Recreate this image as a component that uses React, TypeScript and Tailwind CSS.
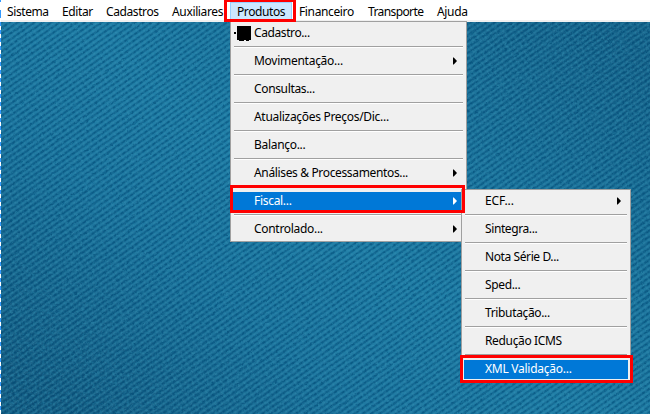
import type { ReactNode } from 'react';

type Entry = { label: string; tracking: string; submenu?: boolean; active?: boolean; icon?: boolean };

const bar = [
  { label: 'Sistema', cell: 'w-[55px] pl-[7px]', tracking: 'tracking-[-0.4px]' },
  { label: 'Editar', cell: 'w-[44px] pl-[7px]', tracking: 'tracking-[-0.4px]' },
  { label: 'Cadastros', cell: 'w-[66px] pl-[7px]', tracking: 'tracking-[-0.4px]' },
  { label: 'Auxiliares', cell: 'w-[65px] pl-[7px]', tracking: 'tracking-[-0.35px]' },
  { label: 'Produtos', cell: 'w-[62px] pl-[6px]', tracking: 'tracking-[-0.4px]', active: true },
  { label: 'Financeiro', cell: 'w-[69px] pl-[7px]', tracking: 'tracking-[-0.37px]' },
  { label: 'Transporte', cell: 'w-[69px] pl-[7px]', tracking: 'tracking-[-0.6px]' },
  { label: 'Ajuda', cell: 'w-[45px] pl-[7px]', tracking: 'tracking-[-0.35px]' },
];

const produtos: Entry[] = [
  { label: 'Cadastro...', tracking: 'tracking-[-0.4px]', icon: true },
  { label: 'Movimentação...', tracking: 'tracking-[-0.27px]', submenu: true },
  { label: 'Consultas...', tracking: 'tracking-[-0.35px]' },
  { label: 'Atualizações Preços/Dic...', tracking: 'tracking-[-0.3px]' },
  { label: 'Balanço...', tracking: 'tracking-[-0.3px]' },
  { label: 'Análises & Processamentos...', tracking: 'tracking-[-0.35px]', submenu: true },
  { label: 'Fiscal...', tracking: 'tracking-[-0.3px]', submenu: true, active: true },
  { label: 'Controlado...', tracking: 'tracking-[-0.3px]', submenu: true },
];

const fiscal: Entry[] = [
  { label: 'ECF...', tracking: 'tracking-[-0.1px]', submenu: true },
  { label: 'Sintegra...', tracking: 'tracking-[-0.4px]' },
  { label: 'Nota Série D...', tracking: 'tracking-[-0.4px]' },
  { label: 'Sped...', tracking: 'tracking-[-0.35px]' },
  { label: 'Tributação...', tracking: 'tracking-[-0.35px]' },
  { label: 'Redução ICMS', tracking: 'tracking-[-0.35px]' },
  { label: 'XML Validação...', tracking: 'tracking-[-0.25px]', active: true },
];

function Menu({ entries, className }: { entries: Entry[]; className: string }) {
  return (
    <div className={'absolute border border-[#a0a0a0] bg-[#f0f0f0] p-0.5 ' + className}>
      {entries.map((e, i) => (
        <div key={e.label}>
          {i > 0 && (
            <div className="mx-px flex h-[9px] flex-col pt-[3px]">
              <div className="h-px bg-[#a0a0a0]" />
              <div className="h-px bg-white" />
            </div>
          )}
          <div className={'flex h-[19px] items-center ' + (e.active ? 'bg-[#0078d7] text-white' : 'text-black')}>
            <div className="w-[21px] shrink-0">
              {e.icon && (
                <svg width="20" height="19" viewBox="0 0 20 19" shapeRendering="crispEdges">
                  <path fill="#000" d="M4 2h14v14h-2v1h-3v-1h-2v1H6v-1H4zM1 8h2v2H1z" />
                </svg>
              )}
            </div>
            <span className={'h-[19px] flex-1 whitespace-nowrap leading-[17px] ' + e.tracking}>{e.label}</span>
            {e.submenu && (
              <svg className="mb-px mr-[7px] shrink-0" width="4" height="8" viewBox="0 0 4 8">
                <path d="M0 0.5h.7L4 4 .7 7.5H0z" fill="currentColor" />
              </svg>
            )}
          </div>
        </div>
      ))}
    </div>
  );
}

function Desktop({ children }: { children: ReactNode }) {
  return (
    <main className="relative flex-1 bg-[#186b94]">
      <svg className="block" width="650" height="392">
        <defs>
          <pattern id="weave" width="6" height="4.8" patternUnits="userSpaceOnUse" patternTransform="rotate(-35)">
            <rect y="0" width="6" height="1.9" fill="#064a75" opacity=".34" />
            <rect x="1" y="0" width="3" height="2" fill="#064a75" opacity=".35" />
            <rect y="2.6" width="6" height="1.5" fill="#3697b8" opacity=".28" />
            <rect x="4" y="2.4" width="2" height="1.8" fill="#45a3c1" opacity=".2" />
          </pattern>
          <linearGradient id="light" gradientUnits="userSpaceOnUse" x1="130" y1="440" x2="520" y2="-50">
            <stop offset="0" stopColor="#125479" />
            <stop offset=".3" stopColor="#19709a" />
            <stop offset=".5" stopColor="#1d7aa3" />
            <stop offset=".72" stopColor="#196f98" />
            <stop offset="1" stopColor="#135c83" />
          </linearGradient>
          <filter id="fray" x="0" y="0" width="100%" height="100%">
            <feTurbulence type="fractalNoise" baseFrequency=".2" numOctaves="2" seed="9" result="n" />
            <feDisplacementMap in="SourceGraphic" in2="n" scale="2.2" xChannelSelector="R" yChannelSelector="G" />
          </filter>
          <filter id="grain" x="0" y="0" width="100%" height="100%">
            <feTurbulence type="fractalNoise" baseFrequency=".4" numOctaves="2" seed="4" />
            <feColorMatrix values="0 0 0 0 0.02  0 0 0 0 0.22  0 0 0 0 0.38  1.4 0 0 0 -0.57" />
          </filter>
        </defs>
        <rect width="650" height="392" fill="url(#light)" />
        <g filter="url(#fray)">
          <rect x="-10" y="-10" width="670" height="412" fill="url(#weave)" />
        </g>
        <rect width="650" height="392" filter="url(#grain)" />
      </svg>
      {children}
    </main>
  );
}

export default function App() {
  return (
    <div className="relative flex h-[414px] w-[650px] flex-col overflow-hidden font-['Noto_Sans','Open_Sans',sans-serif] text-[12px]">
      <nav className="flex h-[22px] border-b-2 border-[#f0f0f0] bg-white pt-0.5 text-black">
        {bar.map((b) => (
          <div key={b.label} className={'flex items-center whitespace-nowrap leading-[19px] ' + b.cell + ' ' + b.tracking + (b.active ? ' border border-[#99d1ff] bg-[#cce8ff]' : '')}>
            {b.label}
          </div>
        ))}
      </nav>
      <Desktop>
        <Menu entries={produtos} className="-top-px left-[230px] w-[237px]" />
        <Menu entries={fiscal} className="left-[461px] top-[167px] w-[170px]" />
      </Desktop>
      <div className="absolute left-0 top-0 h-[22px] w-px bg-[linear-gradient(to_bottom,#3399ff_0_2px,#ffffff_2px_10px,#3399ff_10px_18px,#ffffff_18px)]" />
      <div className="absolute left-0 top-[22px] h-[392px] w-px bg-[repeating-linear-gradient(to_bottom,#3399ff_0_4px,#ffffff_4px_8px)]" />
      <div className="absolute left-[224px] -top-px h-[23px] w-[72px] border-3 border-[#ff0000]" />
      <div className="absolute left-[230px] top-[185px] h-[28px] w-[235px] border-3 border-[#ff0000]" />
      <div className="absolute left-[460px] top-[355px] h-[28px] w-[173px] border-3 border-[#ff0000]" />
    </div>
  );
}
